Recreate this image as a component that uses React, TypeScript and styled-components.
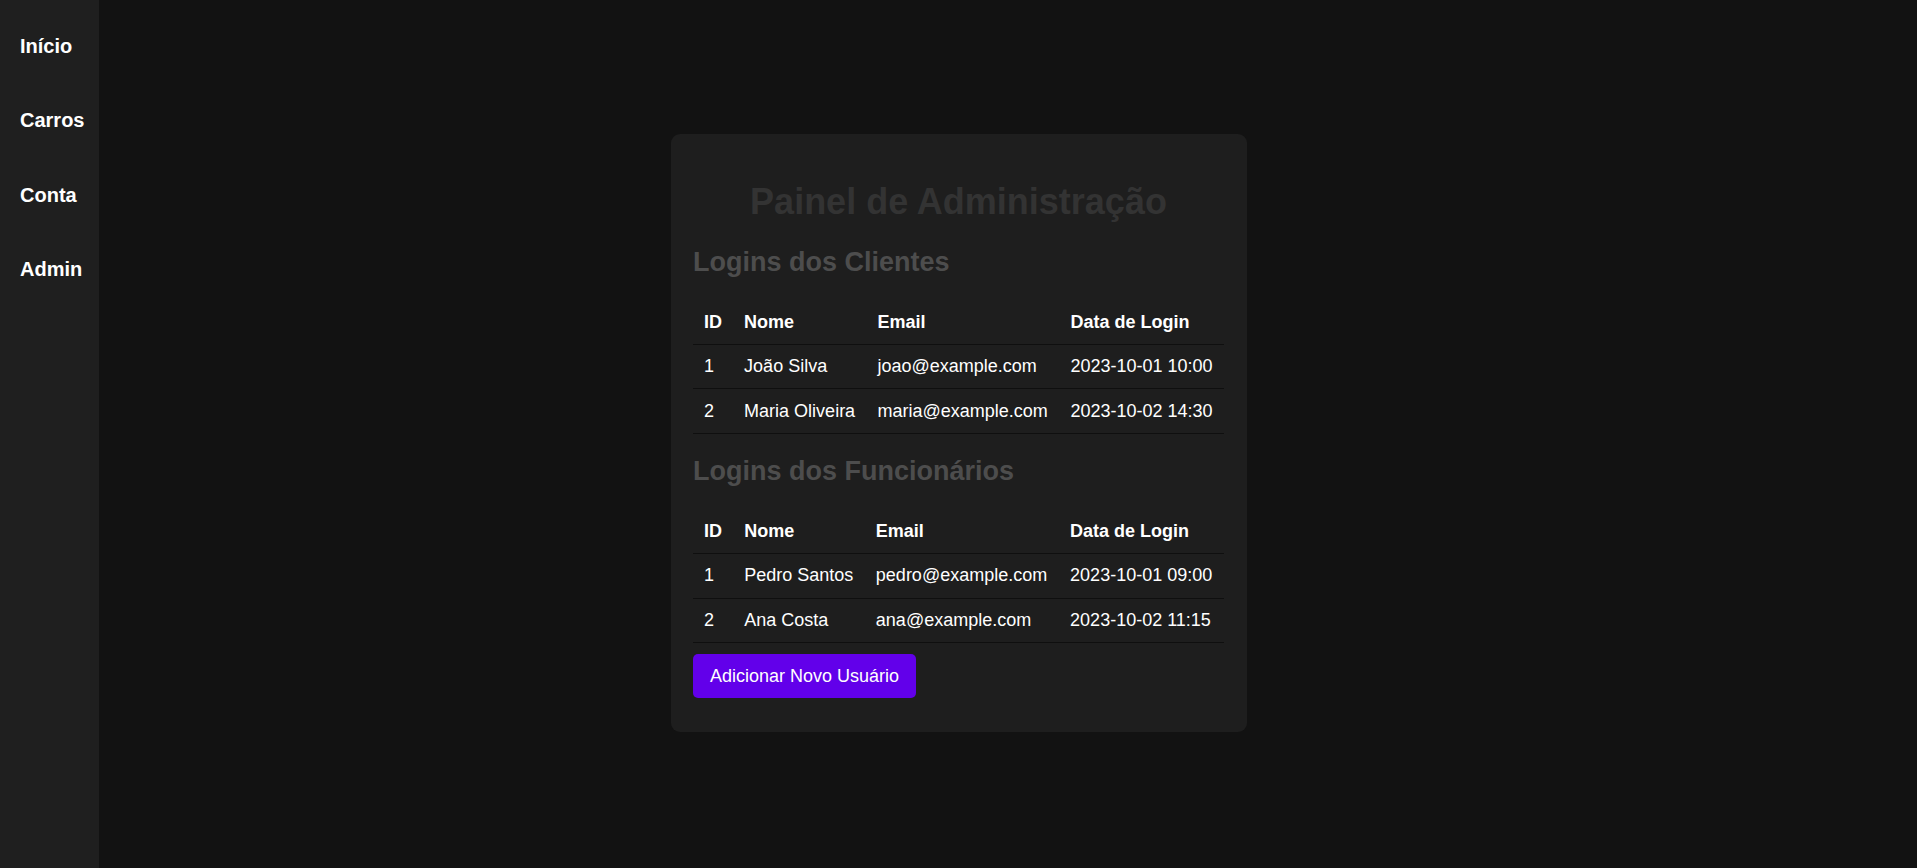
import React from "react";
import styled, { createGlobalStyle } from "styled-components";

const GlobalStyle = createGlobalStyle`
  * { box-sizing: border-box; }
  html, body {
    margin: 0;
    padding: 0;
    background: #121212;
    color: #ffffff;
    font-family: "Liberation Sans", Arial, Helvetica, sans-serif;
    font-size: 18px;
  }
`;

const Page = styled.div`
  display: grid;
  grid-template-columns: 99px 1fr;
  min-height: 100vh;
`;

const Sidebar = styled.nav`
  background: #1f1f1f;
  display: flex;
  flex-direction: column;
  gap: 23.3px;
  padding-top: 21px;
`;

const NavLink = styled.a`
  display: block;
  padding: 14px 0 14px 20px;
  color: #ffffff;
  text-decoration: none;
  font-weight: bold;
  font-size: 20px;
  line-height: 23px;
`;

const Main = styled.main`
  display: flex;
  align-items: center;
  justify-content: center;
  padding-right: 99px;
  padding-bottom: 2px;
  min-height: 100vh;
`;

const Card = styled.section`
  width: 576px;
  padding: 22.5px;
  background: #1e1e1e;
  border-radius: 9px;
`;

const Title = styled.h1`
  margin: 24.1px 0;
  font-size: 36px;
  font-weight: bold;
  text-align: center;
  color: #333333;
`;

const SectionTitle = styled.h2`
  margin: 22.4px 0;
  font-size: 27px;
  font-weight: bold;
  color: #4d4d4d;
`;

const Table = styled.table`
  width: 100%;
  border-collapse: collapse;
  font-size: 18px;
`;

const HeadCell = styled.th`
  padding: 11.25px 11px;
  text-align: left;
  font-weight: bold;
  color: #ffffff;
  white-space: nowrap;
  border-bottom: 1px solid #0f0f0f;
`;

const Cell = styled.td`
  padding: 11.25px 11px;
  text-align: left;
  color: #ffffff;
  white-space: nowrap;
  border-bottom: 1px solid #0f0f0f;
`;

const AddButton = styled.button`
  display: inline-block;
  margin: 11.25px 0;
  padding: 11.25px 16.9px;
  background: #6200ea;
  color: #ffffff;
  border: none;
  border-radius: 5px;
  font-family: inherit;
  font-size: 18px;
  cursor: pointer;
`;

type Login = { id: number; nome: string; email: string; data: string };

const clientes: Login[] = [
  { id: 1, nome: "João Silva", email: "joao@example.com", data: "2023-10-01 10:00" },
  { id: 2, nome: "Maria Oliveira", email: "maria@example.com", data: "2023-10-02 14:30" },
];

const funcionarios: Login[] = [
  { id: 1, nome: "Pedro Santos", email: "pedro@example.com", data: "2023-10-01 09:00" },
  { id: 2, nome: "Ana Costa", email: "ana@example.com", data: "2023-10-02 11:15" },
];

function LoginTable({ rows }: { rows: Login[] }) {
  return (
    <Table>
      <thead>
        <tr>
          <HeadCell>ID</HeadCell>
          <HeadCell>Nome</HeadCell>
          <HeadCell>Email</HeadCell>
          <HeadCell>Data de Login</HeadCell>
        </tr>
      </thead>
      <tbody>
        {rows.map((r) => (
          <tr key={r.id}>
            <Cell>{r.id}</Cell>
            <Cell>{r.nome}</Cell>
            <Cell>{r.email}</Cell>
            <Cell>{r.data}</Cell>
          </tr>
        ))}
      </tbody>
    </Table>
  );
}

export default function App() {
  return (
    <>
      <GlobalStyle />
      <Page>
        <Sidebar>
          <NavLink href="#">Início</NavLink>
          <NavLink href="#">Carros</NavLink>
          <NavLink href="#">Conta</NavLink>
          <NavLink href="#">Admin</NavLink>
        </Sidebar>
        <Main>
          <Card>
            <Title>Painel de Administração</Title>
            <SectionTitle>Logins dos Clientes</SectionTitle>
            <LoginTable rows={clientes} />
            <SectionTitle>Logins dos Funcionários</SectionTitle>
            <LoginTable rows={funcionarios} />
            <AddButton>Adicionar Novo Usuário</AddButton>
          </Card>
        </Main>
      </Page>
    </>
  );
}
